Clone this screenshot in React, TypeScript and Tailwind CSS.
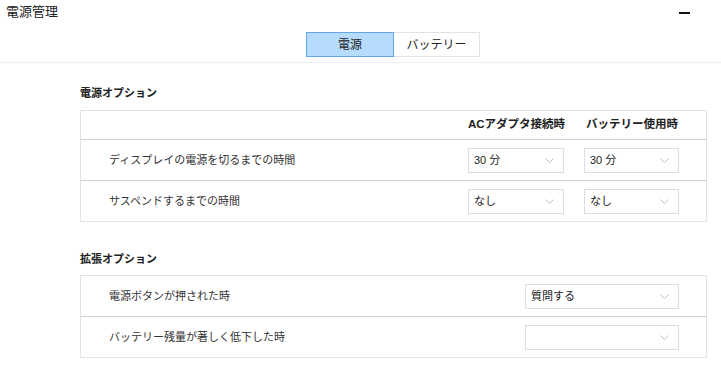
import React from 'react';

const font = 'font-["Liberation_Sans","Noto_Sans_CJK_JP",sans-serif]';

const Chevron: React.FC = () => (
  <svg width="9" height="5" viewBox="0 0 9 5" className="shrink-0">
    <polyline points="0.5,0.5 4.5,4.5 8.5,0.5" fill="none" stroke="#bdbdbd" strokeWidth="1" />
  </svg>
);

const Select: React.FC<{ value?: string; className?: string }> = ({ value = '', className = '' }) => (
  <div
    className={`h-[25px] border border-[#dedede] bg-white flex items-center justify-between pl-[5px] pr-[9px] text-[11px] text-[#222] ${className}`}
  >
    <span>{value}</span>
    <Chevron />
  </div>
);

const App: React.FC = () => {
  return (
    <div className={`w-[721px] h-[372px] bg-white text-[#333] overflow-hidden ${font}`}>
      {/* header */}
      <div className="h-[32px] pl-[6px] pt-[3px] flex justify-between pr-[31px]">
        <span className="text-[13px] leading-[18px] text-[#222]">電源管理</span>
        <span className="block w-[11px] h-[1.5px] bg-[#111] mt-[9px]" />
      </div>
      <div className="h-[25px] flex pl-[306px]">
        <div className="w-[88px] h-full bg-[#b6dcfd] border border-[#62a6e6] flex items-center justify-center text-[12px] text-[#222]">
          電源
        </div>
        <div className="w-[86px] h-full border border-l-0 border-[#e2e2e2] flex items-center justify-center text-[12px] text-[#222]">
          バッテリー
        </div>
      </div>
      <div className="h-[6px] border-b border-[#ececec]" />

      {/* power options */}
      <div className="pl-[80px] pr-[14px]">
        <h2 className="mt-[22px] mb-[9px] text-[11px] leading-[16px] font-bold text-[#222]">電源オプション</h2>
        <div className="border border-[#e2e2e2]">
          <div className="h-[29px] grid grid-cols-[1fr_96px_95px] gap-x-[20px] pl-[28px] pr-[27px] items-center border-b border-[#cfcfcf] text-[11.5px] font-bold text-[#222] whitespace-nowrap">
            <span />
            <span>ACアダプタ接続時</span>
            <span className="pl-[2px]">バッテリー使用時</span>
          </div>
          <div className="h-[41px] grid grid-cols-[1fr_96px_95px] gap-x-[20px] pl-[28px] pr-[27px] items-center border-b border-[#cfcfcf] text-[11px]">
            <span>ディスプレイの電源を切るまでの時間</span>
            <Select value="30 分" />
            <Select value="30 分" />
          </div>
          <div className="h-[40px] grid grid-cols-[1fr_96px_95px] gap-x-[20px] pl-[28px] pr-[27px] items-center text-[11px]">
            <span>サスペンドするまでの時間</span>
            <Select value="なし" />
            <Select value="なし" />
          </div>
        </div>

        {/* extended options */}
        <h2 className="mt-[29px] mb-[8px] text-[11px] leading-[16px] font-bold text-[#222]">拡張オプション</h2>
        <div className="border border-[#e2e2e2]">
          <div className="h-[41px] grid grid-cols-[1fr_154px] pl-[28px] pr-[27px] items-center border-b border-[#cfcfcf] text-[11px]">
            <span>電源ボタンが押された時</span>
            <Select value="質問する" />
          </div>
          <div className="h-[40px] grid grid-cols-[1fr_154px] pl-[28px] pr-[27px] items-center text-[11px]">
            <span>バッテリー残量が著しく低下した時</span>
            <Select />
          </div>
        </div>
      </div>
    </div>
  );
};

export default App;
